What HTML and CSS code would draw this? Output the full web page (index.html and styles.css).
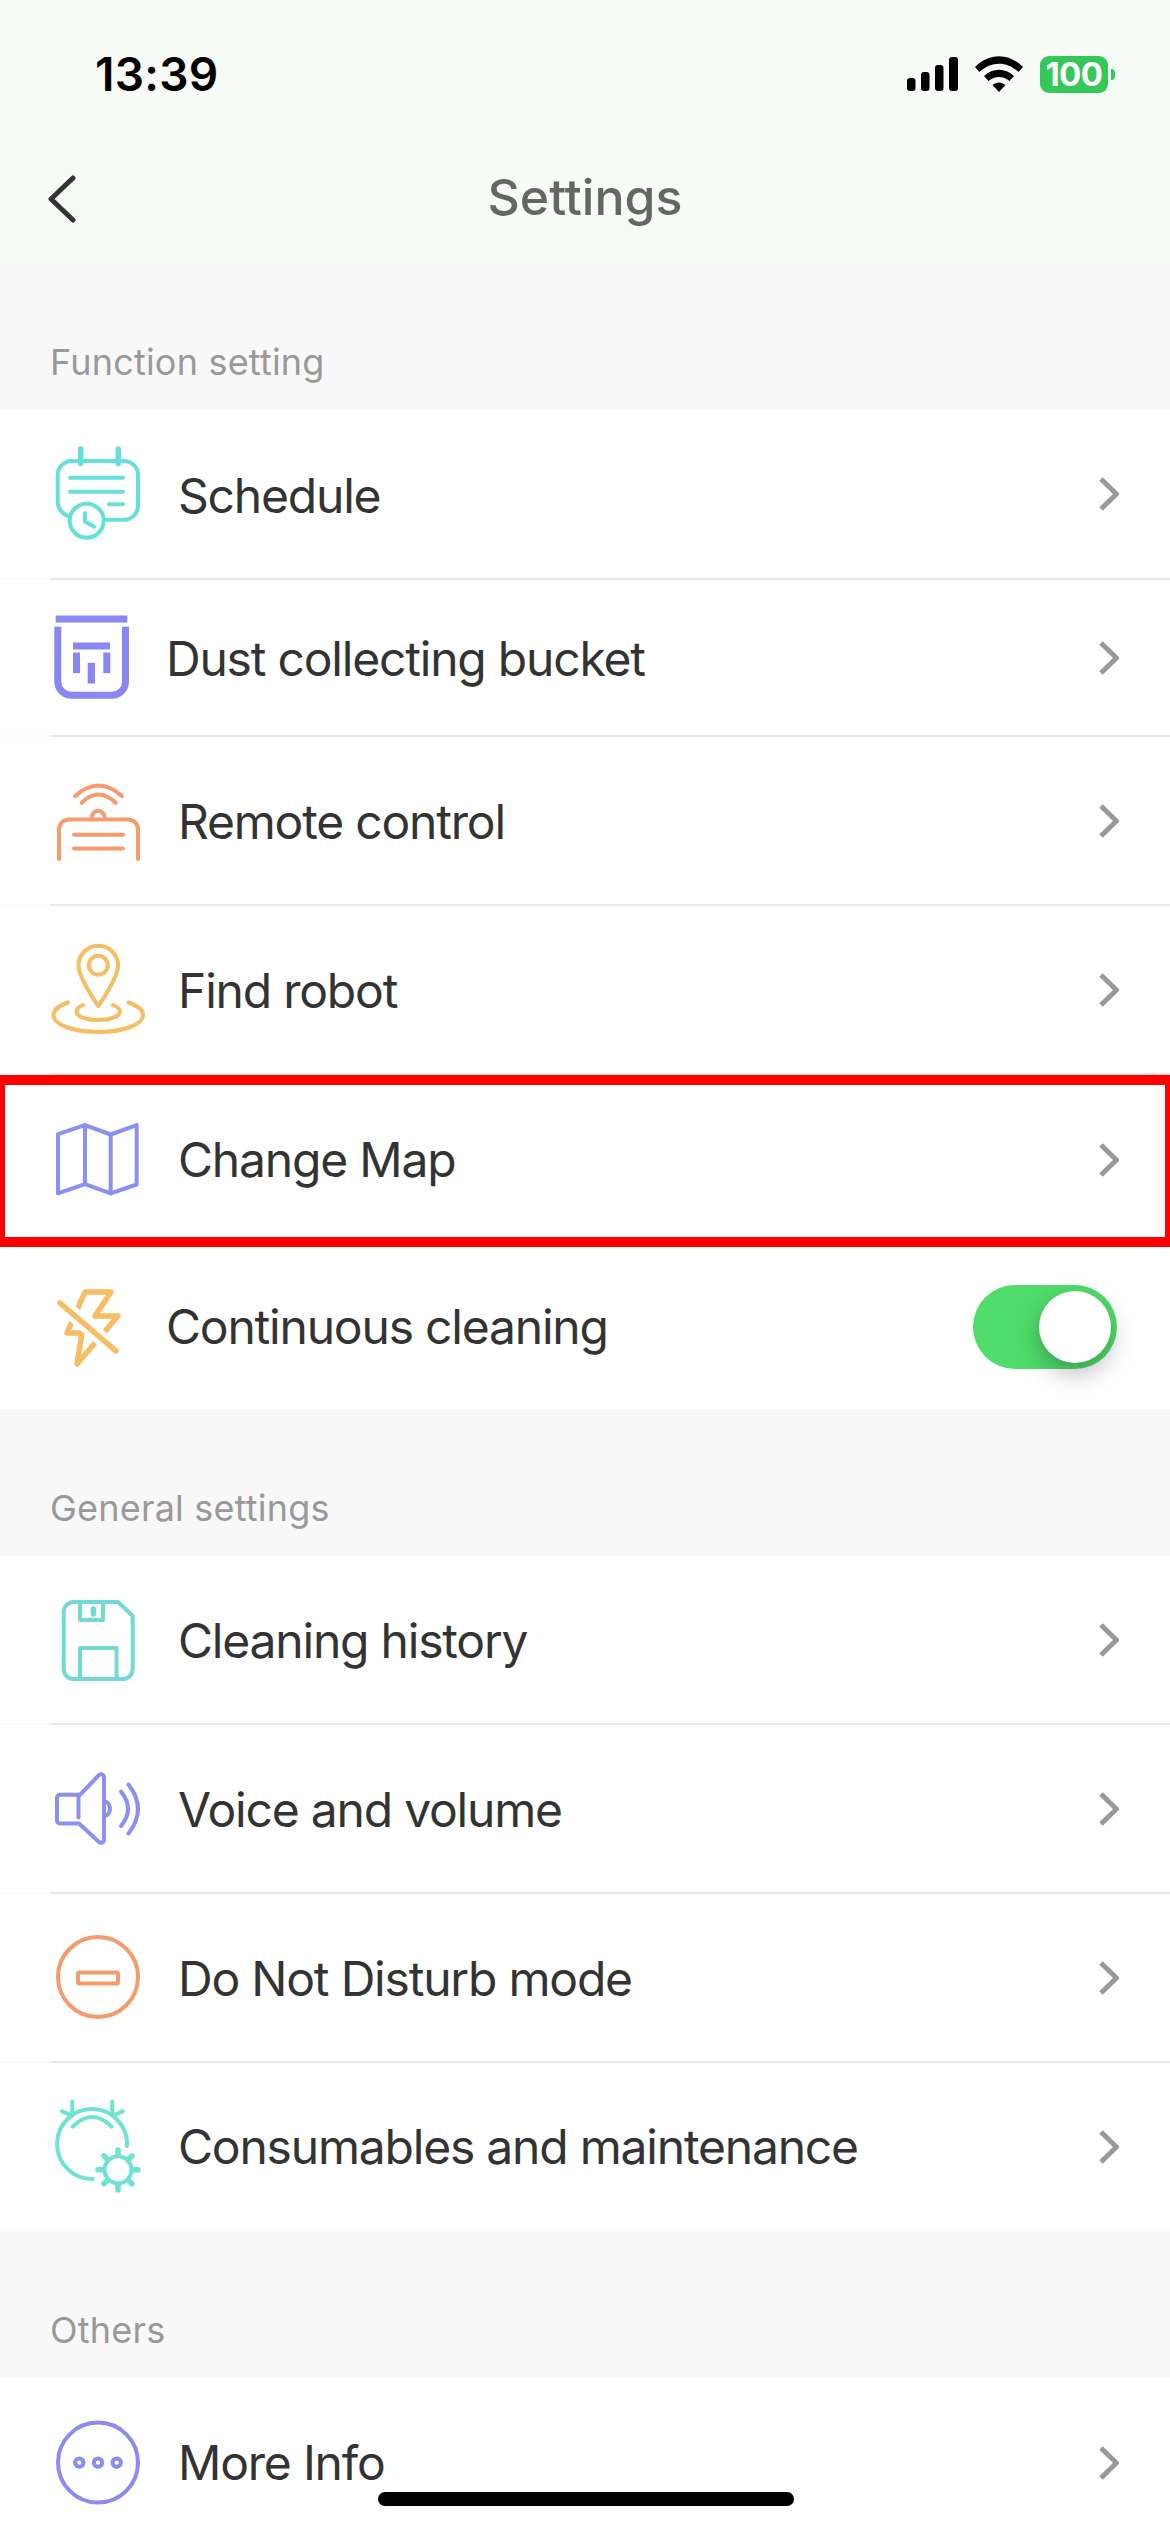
FILE: index.html
```html
<!DOCTYPE html>
<html lang="en">
<head>
  <meta charset="UTF-8" />
  <meta name="viewport" content="width=device-width, initial-scale=1" />
  <title>Settings</title>
  <link rel="stylesheet" href="styles.css">
</head>
<body>
  <header class="top">
    <div class="status">
      <span class="status-time">13:39</span>
      <div class="status-icons">
        <svg class="status-signal" viewBox="0 0 51 34" width="51" height="34">
          <rect x="0" y="21" width="8.5" height="13" rx="3"/>
          <rect x="14" y="15" width="8.5" height="19" rx="3"/>
          <rect x="28" y="8" width="8.5" height="26" rx="3"/>
          <rect x="42" y="0" width="9" height="34" rx="3"/>
        </svg>
        <svg class="status-wifi" viewBox="0 0 48 36" width="48" height="36">
          <path d="M0 11 C14 -3.5 34 -3.5 48 11 L43.5 16 C32 5 16 5 4.5 16 Z"/>
          <path d="M9 20 C18 11.5 30 11.5 39 20 L34.5 25 C28 19.5 20 19.5 13.5 25 Z"/>
          <path d="M17.5 29 C21.5 25.5 26.5 25.5 30.5 29 L24 36 Z"/>
        </svg>
        <div class="battery"><span class="battery-level">100</span></div>
      </div>
    </div>
    <div class="nav">
      <svg class="nav-back" viewBox="0 0 28 48" width="28" height="48">
        <path d="M25 3 L3 24 L25 45"/>
      </svg>
      <h1 class="nav-title">Settings</h1>
    </div>
  </header>

  <main>
    <h2 class="section-title section-title-first">Function setting</h2>
    <ul class="rows">
      <li class="row row-first">
        <div class="row-body">
          <svg class="row-icon icon-teal" viewBox="0 0 100 100">
            <path d="M56 75.7 H74 a14 14 0 0 0 14-14 V31 a14 14 0 0 0-14-14 H21.7 a14 14 0 0 0-14 14 V58 c0 6 4 11 10 14"/>
            <path class="thick" d="M30.7 5 V19.5 M68.3 5 V19.5"/>
            <path d="M20 33.7 H73 M20 47.7 H73 M59 60.3 H73"/>
            <circle cx="36.7" cy="76.7" r="17"/>
            <path d="M35 69.3 V77.7 L44.3 82.7"/>
          </svg>
          <span class="row-label">Schedule</span>
          <svg class="chevron" viewBox="0 0 20 34"><path d="M2 2 L17.5 17 L2 32"/></svg>
        </div>
      </li>
      <li class="row row-short">
        <div class="row-body row-tight">
          <svg class="row-icon icon-filled" viewBox="0 0 100 100">
            <rect x="5.7" y="7.5" width="71.6" height="7"/>
            <path d="M4.3 18.8 H11.3 V73.8 a10 10 0 0 0 10 10 H62 a10 10 0 0 0 10-10 V18.8 H79 V73.8 a17 17 0 0 1-17 17 H21.3 a17 17 0 0 1-17-17 Z"/>
            <rect x="23" y="34.5" width="37" height="7"/>
            <rect x="23" y="44.5" width="7" height="20.7"/>
            <rect x="37.7" y="54.8" width="7.3" height="20.7"/>
            <rect x="53.3" y="44.5" width="7" height="20.7"/>
          </svg>
          <span class="row-label">Dust collecting bucket</span>
          <svg class="chevron" viewBox="0 0 20 34"><path d="M2 2 L17.5 17 L2 32"/></svg>
        </div>
      </li>
      <li class="row">
        <div class="row-body">
          <svg class="row-icon icon-orange" viewBox="0 0 100 100">
            <path d="M25 25.2 Q48.3 3.8 72 25.2"/>
            <path d="M31.7 31.8 Q48.3 15.2 65.7 31.8"/>
            <path d="M41.7 46.5 a6.5 6.5 0 0 1 13 0"/>
            <path d="M9 88 V58.5 a10 10 0 0 1 10-10 H78 a10 10 0 0 1 10 10 V88"/>
            <path d="M24 63.8 H73 M24 77.5 H73"/>
          </svg>
          <span class="row-label">Remote control</span>
          <svg class="chevron" viewBox="0 0 20 34"><path d="M2 2 L17.5 17 L2 32"/></svg>
        </div>
      </li>
      <li class="row">
        <div class="row-body">
          <svg class="row-icon icon-yellow" viewBox="0 0 100 100">
            <path d="M48.3 66 C48.3 66 28.5 38 28.5 25.5 a19.8 19.8 0 0 1 39.6 0 C68.1 38 48.3 66 48.3 66 Z"/>
            <circle cx="48.3" cy="25.2" r="9.5"/>
            <path d="M18 62.5 C8 66 3.5 70 3.5 75 C3.5 85 24 92 48.3 92 S93 85 93 75 C93 70 88 66 78.5 62.5"/>
            <path d="M33 65 C28 67 26.5 69.5 26.5 71.5 C26.5 76.5 36 80 48 80 S70 76.5 70 71.5 C70 69 68 67 63 65"/>
          </svg>
          <span class="row-label">Find robot</span>
          <svg class="chevron" viewBox="0 0 20 34"><path d="M2 2 L17.5 17 L2 32"/></svg>
        </div>
      </li>
      <li class="row row-marked">
        <div class="row-body row-plain">
          <svg class="row-icon icon-periwinkle" viewBox="0 0 100 100">
            <path d="M8 24.1 L35 15.1 L60.7 24.5 L86.7 15.1 V74.5 L60.7 83.4 L35 74.1 L8 83.4 Z"/>
            <path d="M35 15.1 V74.1 M60.7 24.5 V83.4"/>
          </svg>
          <span class="row-label">Change Map</span>
          <svg class="chevron" viewBox="0 0 20 34"><path d="M2 2 L17.5 17 L2 32"/></svg>
        </div>
        <div class="row-marker"></div>
      </li>
      <li class="row row-toggle">
        <div class="row-body row-plain row-tight">
          <svg class="row-icon icon-yellow icon-bold" viewBox="0 0 100 100">
            <path d="M35 15 H61 L45 39 H68 L27 87 L32 56 H17 Z"/>
            <path class="slash-gap" d="M10 26 L66 74"/>
            <path d="M10 26 L66 74"/>
          </svg>
          <span class="row-label">Continuous cleaning</span>
          <div class="toggle"><div class="toggle-knob"></div></div>
        </div>
      </li>
    </ul>

    <h2 class="section-title">General settings</h2>
    <ul class="rows">
      <li class="row">
        <div class="row-body">
          <svg class="row-icon icon-aqua" viewBox="0 0 100 100">
            <path d="M23.7 12 H68 L82.7 26 V79 a10 10 0 0 1-10 10 H23.7 a10 10 0 0 1-10-10 V22 a10 10 0 0 1 10-10 Z"/>
            <path d="M30 12 V30 H53 V12"/>
            <path class="thick" d="M43.4 19 V24"/>
            <path d="M30 89 V58 H66.5 V89"/>
          </svg>
          <span class="row-label">Cleaning history</span>
          <svg class="chevron" viewBox="0 0 20 34"><path d="M2 2 L17.5 17 L2 32"/></svg>
        </div>
      </li>
      <li class="row">
        <div class="row-body">
          <svg class="row-icon icon-periwinkle" viewBox="0 0 100 100">
            <path d="M30 35.8 H10 a3 3 0 0 0-3 3 V61.5 a3 3 0 0 0 3 3 H29 L49 83 a3 3 0 0 0 5-2 V18 a3 3 0 0 0-5-2 Z"/>
            <path d="M28.5 36 V58.5"/>
            <path d="M54 42 a8 8 0 0 1 0 15.5"/>
            <path d="M71 32.5 Q85 50 71 67"/>
            <path d="M78.5 25.5 Q97.5 50 78.5 74.5"/>
          </svg>
          <span class="row-label">Voice and volume</span>
          <svg class="chevron" viewBox="0 0 20 34"><path d="M2 2 L17.5 17 L2 32"/></svg>
        </div>
      </li>
      <li class="row">
        <div class="row-body">
          <svg class="row-icon icon-orange" viewBox="0 0 100 100">
            <circle cx="48" cy="49" r="40"/>
            <rect x="28" y="44.5" width="40" height="11" rx="1.5"/>
          </svg>
          <span class="row-label">Do Not Disturb mode</span>
          <svg class="chevron" viewBox="0 0 20 34"><path d="M2 2 L17.5 17 L2 32"/></svg>
        </div>
      </li>
      <li class="row row-end">
        <div class="row-body row-plain">
          <svg class="row-icon icon-mint" viewBox="0 0 100 100">
            <path d="M77 49 A35 35 0 1 0 42.7 82"/>
            <path d="M22.7 29.7 Q42 10.3 61.7 29.7"/>
            <path d="M22.3 4.5 V16 M12 14.4 L22 18.5 M62.3 4.5 V16 M72.7 14.4 L63 18.5"/>
            <circle cx="68" cy="72.8" r="13.5"/>
            <path class="thick" d="M68 53 V58 M68 88 V93 M48 72.8 H53 M83 72.8 H88 M57.4 62.2 L54 58.8 M78.6 62.2 L82 58.8 M57.4 83.4 L54 86.8 M78.6 83.4 L82 86.8"/>
          </svg>
          <span class="row-label">Consumables and maintenance</span>
          <svg class="chevron" viewBox="0 0 20 34"><path d="M2 2 L17.5 17 L2 32"/></svg>
        </div>
      </li>
    </ul>

    <h2 class="section-title">Others</h2>
    <ul class="rows">
      <li class="row">
        <div class="row-body row-plain">
          <svg class="row-icon icon-violet" viewBox="0 0 100 100">
            <circle cx="48" cy="49.6" r="40"/>
            <circle cx="29.3" cy="49.6" r="4.2"/>
            <circle cx="48" cy="49.6" r="4.2"/>
            <circle cx="66.7" cy="49.6" r="4.2"/>
          </svg>
          <span class="row-label">More Info</span>
          <svg class="chevron" viewBox="0 0 20 34"><path d="M2 2 L17.5 17 L2 32"/></svg>
        </div>
      </li>
    </ul>
  </main>

  <div class="home-bar"></div>
</body>
</html>
```

FILE: styles.css
```css
* {
  box-sizing: border-box;
}
body {
  position: relative;
  margin: 0;
  height: 2532px;
  overflow: hidden;
  background: #f8f8f8;
  color: #333;
  font-family: Inter, "Noto Sans", sans-serif;
}

/* Status bar and title */
.top {
  height: 265px;
  background: #f6fbf6;
}
.status {
  display: flex;
  justify-content: space-between;
  align-items: center;
  height: 148px;
  padding: 0 62px 0 95px;
}
.status-time {
  color: #000;
  font-size: 46px;
  font-weight: 600;
  letter-spacing: 0.3px;
  line-height: 56px;
}
.status-icons {
  display: flex;
  align-items: center;
  gap: 17px;
}
.battery {
  position: relative;
  display: flex;
  justify-content: center;
  align-items: center;
  width: 68px;
  height: 37px;
  border-radius: 9px;
  background: #34c759;
}
.battery::after {
  content: "";
  position: absolute;
  top: 13px;
  right: -7px;
  width: 4px;
  height: 11px;
  border-radius: 0 5px 5px 0;
  background: #34c759;
}
.battery-level {
  color: #fff;
  font-size: 33px;
  font-weight: 700;
  letter-spacing: -0.5px;
  line-height: 37px;
}
.nav {
  position: relative;
  display: flex;
  justify-content: center;
  align-items: center;
  height: 98px;
}
.nav-back {
  position: absolute;
  top: 27px;
  left: 48px;
  fill: none;
  stroke: #333;
  stroke-width: 5;
  stroke-linecap: round;
  stroke-linejoin: round;
}
.nav-title {
  margin: 0;
  color: #666;
  font-size: 50px;
  font-weight: 500;
  line-height: 60px;
}

/* Sections */
.section-title {
  display: flex;
  align-items: flex-end;
  height: 147px;
  margin: 0;
  padding: 0 50px 26px;
  color: #999;
  font-size: 36px;
  font-weight: 400;
  letter-spacing: 0.2px;
  line-height: 44px;
}
.section-title-first {
  height: 145px;
}
.rows {
  margin: 0;
  padding: 0;
  list-style: none;
  background: #fff;
}
.row {
  position: relative;
  height: 169px;
  padding-left: 50px;
  background: linear-gradient(#fbfbfb, #fbfbfb) left bottom / 50px 2px no-repeat;
}
.row-first {
  height: 170px;
}
.row-short {
  height: 157px;
}
.row-toggle {
  height: 165px;
  background: none;
}
.row-end {
  height: 168px;
  background: none;
}
.row-body {
  display: flex;
  align-items: center;
  height: 100%;
  padding-right: 51px;
  border-bottom: 2px solid #e8e8e8;
}
.row-plain {
  border-bottom: 0;
}
.row-icon {
  flex: none;
  width: 100px;
  height: 100px;
  margin-right: 28px;
  fill: none;
  stroke-width: 4;
  stroke-linecap: round;
  stroke-linejoin: round;
}
.row-tight .row-icon {
  margin-right: 16px;
}
.row-label {
  flex: 1;
  padding-top: 3px;
  font-size: 48px;
  letter-spacing: -1.2px;
  line-height: 60px;
  white-space: nowrap;
}
.row-plain .row-label {
  padding-top: 0;
}
.chevron {
  flex: none;
  width: 20px;
  height: 34px;
  fill: none;
  stroke: #999;
  stroke-width: 5;
}

/* Icon colours */
.icon-teal { stroke: #66e0da; }
.icon-aqua { stroke: #72d9d3; }
.icon-mint { stroke: #6ee2d3; }
.icon-violet { stroke: #8a8cf2; }
.icon-periwinkle { stroke: #8a90f5; }
.icon-orange { stroke: #f59b6e; }
.icon-yellow { stroke: #f6bd62; }
.icon-filled {
  fill: #8a86f2;
  stroke: none;
}
.icon-bold {
  stroke-width: 5.5;
}
.thick {
  stroke-width: 5.5;
}
.slash-gap {
  stroke: #fff;
  stroke-width: 15;
  stroke-linecap: butt;
}

/* Toggle */
.toggle {
  position: relative;
  flex: none;
  width: 144px;
  height: 84px;
  margin-right: 2px;
  border-radius: 42px;
  background: #50dc6a;
}
.toggle-knob {
  position: absolute;
  top: 6px;
  right: 6px;
  width: 72px;
  height: 72px;
  border-radius: 50%;
  background: #fff;
  box-shadow: 0 10px 24px rgba(0, 0, 0, 0.28);
}

/* Red marker round the highlighted row */
.row-marker {
  position: absolute;
  top: 0;
  right: 0;
  bottom: -3px;
  left: 0;
  border: solid #f00;
  border-width: 10px 5px;
}

.home-bar {
  position: absolute;
  bottom: 26px;
  left: 378px;
  width: 416px;
  height: 14px;
  border-radius: 7px;
  background: #000;
}
```
